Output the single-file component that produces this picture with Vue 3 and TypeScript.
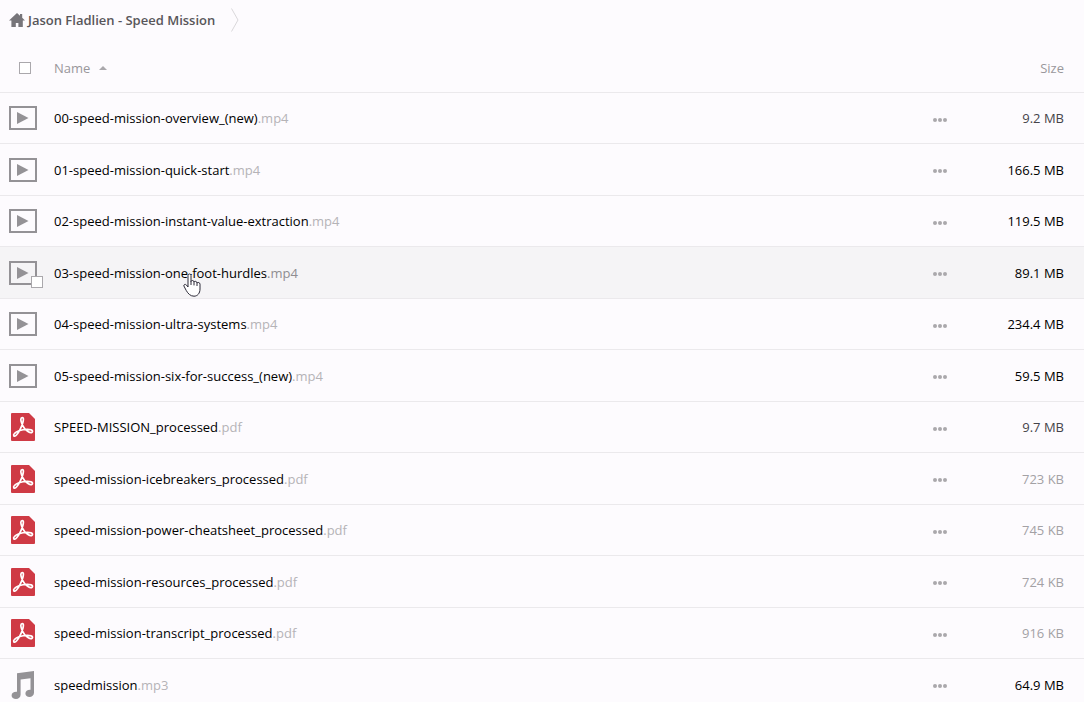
<script setup lang="ts">
import { ref } from 'vue'

type Kind = 'video' | 'pdf' | 'audio'
type Weight = 'light' | 'medium' | 'dark'

interface FileRow {
  name: string
  ext: string
  size: string
  kind: Kind
  weight: Weight
  active?: boolean
}

const files = ref<FileRow[]>([
  { name: '00-speed-mission-overview_(new)', ext: '.mp4', size: '9.2 MB', kind: 'video', weight: 'medium' },
  { name: '01-speed-mission-quick-start', ext: '.mp4', size: '166.5 MB', kind: 'video', weight: 'dark' },
  { name: '02-speed-mission-instant-value-extraction', ext: '.mp4', size: '119.5 MB', kind: 'video', weight: 'dark' },
  { name: '03-speed-mission-one-foot-hurdles', ext: '.mp4', size: '89.1 MB', kind: 'video', weight: 'dark', active: true },
  { name: '04-speed-mission-ultra-systems', ext: '.mp4', size: '234.4 MB', kind: 'video', weight: 'dark' },
  { name: '05-speed-mission-six-for-success_(new)', ext: '.mp4', size: '59.5 MB', kind: 'video', weight: 'dark' },
  { name: 'SPEED-MISSION_processed', ext: '.pdf', size: '9.7 MB', kind: 'pdf', weight: 'medium' },
  { name: 'speed-mission-icebreakers_processed', ext: '.pdf', size: '723 KB', kind: 'pdf', weight: 'light' },
  { name: 'speed-mission-power-cheatsheet_processed', ext: '.pdf', size: '745 KB', kind: 'pdf', weight: 'light' },
  { name: 'speed-mission-resources_processed', ext: '.pdf', size: '724 KB', kind: 'pdf', weight: 'light' },
  { name: 'speed-mission-transcript_processed', ext: '.pdf', size: '916 KB', kind: 'pdf', weight: 'light' },
  { name: 'speedmission', ext: '.mp3', size: '64.9 MB', kind: 'audio', weight: 'dark' },
])
</script>

<template>
  <main class="browser">
    <nav class="crumbs" aria-label="Breadcrumb">
      <a class="crumb" href="#">
        <svg class="home" viewBox="0 0 16 14" width="16" height="14" aria-hidden="true">
          <path d="M8 0 L11 2.7 V1 H13.2 V4.8 L16 7.6 H13.8 V14 H9.4 V10 H6.8 V14 H2.4 V7.6 H0 Z" />
        </svg>
        <span>Jason Fladlien - Speed Mission</span>
      </a>
      <svg class="sep" viewBox="0 0 8 24" width="8" height="24" aria-hidden="true">
        <path d="M0.5 0.5 L7 12 L0.5 23.5" />
      </svg>
    </nav>

    <table class="files">
      <thead>
        <tr>
          <th class="pick" scope="col"><input class="box" type="checkbox" aria-label="Select all" /></th>
          <th class="name" scope="col">
            <button class="sort" type="button">
              Name
              <svg viewBox="0 0 8 4" width="8" height="4" aria-hidden="true"><path d="M0 4 L4 0 L8 4 Z" /></svg>
            </button>
          </th>
          <th class="more" scope="col" aria-label="Actions"></th>
          <th class="size" scope="col"><button class="sort" type="button">Size</button></th>
        </tr>
      </thead>
      <tbody>
        <tr v-for="file in files" :key="file.name" :class="{ active: file.active }">
          <td class="icon">
            <div class="thumb">
              <svg v-if="file.kind === 'video'" viewBox="0 0 28 24" width="28" height="24" aria-hidden="true">
                <rect x="1" y="1" width="26" height="22" fill="none" stroke="#949296" stroke-width="2" />
                <path d="M8 6 L19.5 12 L8 18 Z" fill="#949296" />
              </svg>
              <svg v-else-if="file.kind === 'pdf'" viewBox="0 0 28 28" width="28" height="28" aria-hidden="true">
                <path d="M2 1 Q2 0 3 0 H20 L26 6 V27 Q26 28 25 28 H3 Q2 28 2 27 Z" fill="#cf3a45" />
                <path
                  d="M13.2 4.6 C11.4 4.6 11.6 7.4 12.6 10 C13.6 13 16.6 17 19.4 18.8 C21.8 20.4 24 19.6 23.4 17.8 C22.4 15.8 15 16 10 17.8 C6.2 19.2 3.8 21.4 4.8 22.8 C6.2 24.2 9 20.6 11 16.6 C12.8 13 14.2 9 14.4 6.6 C14.5 5.2 14 4.6 13.2 4.6 Z"
                  fill="none"
                  stroke="#fff"
                  stroke-width="1.7"
                  stroke-linejoin="round"
                />
              </svg>
              <svg v-else viewBox="0 0 28 28" width="28" height="28" aria-hidden="true">
                <path
                  d="M8 2.2 L25 0 V21.8 C25 24.2 22.9 26 20.5 26 C18.1 26 16.4 24.5 16.4 22.5 C16.4 20.1 18.6 18.6 21.5 18.8 V7.2 L11.6 8.4 V23.8 C11.6 26.3 9.5 28 7 28 C4.4 28 2.6 26.5 2.6 24.4 C2.6 21.9 5 20.5 8 20.8 Z"
                  fill="#949296"
                />
              </svg>
              <input v-if="file.active" class="box badge" type="checkbox" :aria-label="`Select ${file.name}`" />
            </div>
          </td>
          <td class="name">
            <a class="link" href="#">{{ file.name }}<span class="ext">{{ file.ext }}</span></a>
            <svg v-if="file.active" class="hand" viewBox="0 0 18 24" width="18" height="24" aria-hidden="true">
              <path
                d="M5 2.6 C5 0.4 8 0.4 8 2.6 V8.4 C8.4 7 11 7.2 11 9 C11.6 7.8 14 8.2 14 10 C14.8 9 17 9.4 17 11.2 V16 C17 20.4 14.4 23.2 11 23.2 C7.4 23.2 5 20.6 3.2 17.4 L0.9 13 C0.4 11.4 2.4 10.8 3.4 12 L5 14 Z"
              />
              <path d="M8 8 V12 M11 9 V12.4 M14 10 V13" />
            </svg>
          </td>
          <td class="more">
            <button class="dots" type="button" :aria-label="`More actions for ${file.name}`">
              <i></i><i></i><i></i>
            </button>
          </td>
          <td class="size" :class="file.weight">{{ file.size }}</td>
        </tr>
      </tbody>
    </table>
  </main>
</template>

<style>
body {
  margin: 0;
  background: #fdfbfe;
}
</style>

<style scoped>
.browser {
  height: 100vh;
  overflow: hidden;
  background: #fdfbfe;
  color: #000;
  font-family: "Open Sans", "Noto Sans", sans-serif;
  font-size: 13px;
  font-kerning: none;
  line-height: 20px;
}

.crumbs {
  display: flex;
  align-items: center;
  gap: 16px;
  height: 40px;
  padding-left: 9px;
}

.crumb {
  display: flex;
  align-items: center;
  gap: 3px;
  color: #58565a;
  font-weight: 600;
  text-decoration: none;
}

.home {
  fill: #77757a;
}

.sep {
  fill: none;
  stroke: #d9d7da;
}

.files {
  width: 100%;
  border-collapse: separate;
  border-spacing: 0;
  table-layout: fixed;
}

th,
td {
  box-sizing: border-box;
  padding: 0;
  border-bottom: 1px solid #ebe9ec;
  text-align: left;
  vertical-align: middle;
  font-weight: 400;
}

th {
  height: 53px;
  padding-top: 3px;
}

td {
  height: 52px;
}

tr:nth-child(odd) td {
  height: 51px;
}

.pick,
.icon {
  width: 54px;
}

.pick {
  padding-left: 19px;
}

.icon {
  padding-left: 9px;
}

.more {
  width: 56px;
}

.size {
  width: 112px;
  padding-right: 20px;
  text-align: right;
}

.box {
  display: block;
  appearance: none;
  box-sizing: border-box;
  width: 12px;
  height: 12px;
  margin: 0;
  border: 1px solid #aaa8ac;
  background: #fff;
}

.sort {
  display: inline-flex;
  align-items: center;
  gap: 9px;
  padding: 0;
  border: 0;
  background: none;
  color: #99979b;
  font: inherit;
}

.sort svg {
  fill: #aaa8ac;
}

.thumb {
  position: relative;
  display: flex;
  align-items: center;
  width: 28px;
}

.thumb svg {
  display: block;
}

.badge {
  position: absolute;
  left: 22px;
  top: 15px;
}

.name {
  position: relative;
}

.link {
  color: #000;
  text-decoration: none;
}

.ext {
  color: #b5b3b7;
}

.active td {
  background: #f5f4f6;
}

.active .ext {
  color: #8f8d91;
}

.hand {
  position: absolute;
  left: 129px;
  top: 26px;
  fill: #fff;
  stroke: #2b2936;
  stroke-width: 1;
  stroke-linejoin: round;
}

.dots {
  display: flex;
  gap: 1px;
  padding: 3px 0 0;
  border: 0;
  margin-left: 17px;
  background: none;
}

.dots i {
  width: 4px;
  height: 4px;
  border-radius: 50%;
  background: #aaa8ac;
}

.light {
  color: #a3a1a5;
}

.medium {
  color: #45434a;
}

.dark {
  color: #000;
}
</style>
